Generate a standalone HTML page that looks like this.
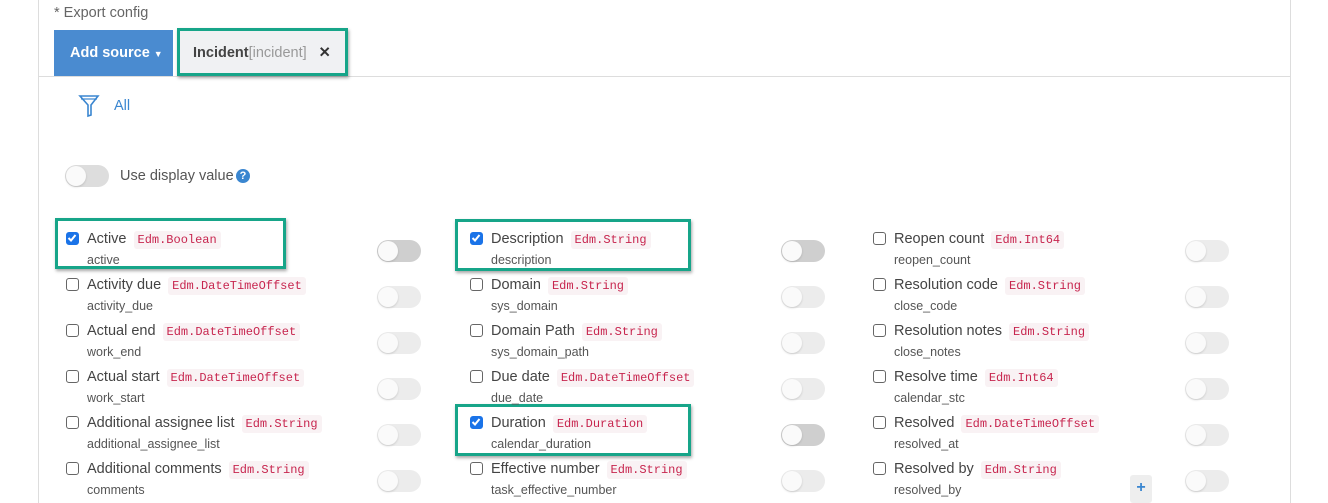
<!DOCTYPE html>
<html><head><meta charset="utf-8"><style>
*{box-sizing:border-box;margin:0;padding:0}
body{width:1328px;height:503px;background:#fff;font-family:"Liberation Sans",sans-serif;color:#444;position:relative;overflow:hidden}
.a{position:absolute}
.lbl{font-size:14.5px;color:#444;white-space:nowrap}
.sub{font-size:12.5px;color:#555;white-space:nowrap}
code{font-family:"Liberation Mono",monospace;font-size:12px;color:#c7254e;background:#f9f2f4;padding:2px 4px;border-radius:3px;margin-left:7px}
.cb{width:13px;height:13px;border:1.5px solid #666;border-radius:3px;background:#fff}
.cb.on{background:#1a73e8;border-color:#1a73e8}
.tg{width:44px;height:22px;border-radius:11px;background:#ececec}
.tg::after{content:"";position:absolute;left:1px;top:1px;width:20px;height:20px;border-radius:50%;background:#fafafa;box-shadow:0 1px 2px rgba(0,0,0,.15)}
.tg.on{background:#cfcfcf}
.gb{border:3px solid #17a589;box-shadow:1px 2px 3px rgba(0,0,0,.35)}
</style></head><body>
<div class="a" style="left:38px;top:0;width:1px;height:503px;background:#ddd"></div>
<div class="a" style="left:1290px;top:0;width:1px;height:503px;background:#ddd"></div>
<div class="a" style="left:38px;top:76px;width:1252px;height:1px;background:#ddd"></div>
<div class="a" style="left:54px;top:5px;font-size:14.5px;color:#666">* Export config</div>
<div class="a" style="left:54px;top:30px;width:119px;height:46px;background:#4a8bd0;color:#fff;font-weight:bold;font-size:14.5px;line-height:46px;padding-left:16px">Add source <span style="font-size:9px">▼</span></div>
<div class="a gb" style="left:177px;top:28px;width:171px;height:48px;background:#f0f1f3;font-size:14.5px;line-height:44px;padding-left:13px"><b style="color:#444">Incident</b><span style="color:#999">[incident]</span><span style="margin-left:12px;font-weight:bold;color:#333">✕</span></div>
<svg class="a" style="left:78px;top:94px" width="22" height="24" viewBox="0 0 22 24"><path d="M2 2H20L13 11V21L10 22V11Z" fill="none" stroke="#3a86d0" stroke-width="1.6"/><path d="M3 5H19" stroke="#3a86d0" stroke-width="1.2"/></svg>
<div class="a" style="left:114px;top:98px;font-size:14.5px;color:#3a86d0">All</div>
<div class="a tg on" style="left:65px;top:165px;background:#ddd"></div>
<div class="a" style="left:120px;top:168px;font-size:14.5px;color:#555">Use display value</div>
<div class="a" style="left:236px;top:169px;width:14px;height:14px;border-radius:50%;background:#3a86d0;color:#fff;font-size:11px;font-weight:bold;text-align:center;line-height:14px">?</div>
<div class="a gb" style="left:55px;top:218px;width:231px;height:51px"></div>
<div class="a gb" style="left:455px;top:219px;width:236px;height:52px"></div>
<div class="a gb" style="left:455px;top:404px;width:236px;height:52px"></div>
<div id="rows"></div>
<div class="a" style="left:1130px;top:475px;width:22px;height:28px;background:#eee;border-radius:3px;color:#3a86d0;font-weight:bold;text-align:center;line-height:26px">+</div>
<script>
var cols=[[66,377,[["Active","Edm.Boolean","active",1],["Activity due","Edm.DateTimeOffset","activity_due"],["Actual end","Edm.DateTimeOffset","work_end"],["Actual start","Edm.DateTimeOffset","work_start"],["Additional assignee list","Edm.String","additional_assignee_list"],["Additional comments","Edm.String","comments"]]],
[470,781,[["Description","Edm.String","description",1],["Domain","Edm.String","sys_domain"],["Domain Path","Edm.String","sys_domain_path"],["Due date","Edm.DateTimeOffset","due_date"],["Duration","Edm.Duration","calendar_duration",1],["Effective number","Edm.String","task_effective_number"]]],
[873,1185,[["Reopen count","Edm.Int64","reopen_count"],["Resolution code","Edm.String","close_code"],["Resolution notes","Edm.String","close_notes"],["Resolve time","Edm.Int64","calendar_stc"],["Resolved","Edm.DateTimeOffset","resolved_at"],["Resolved by","Edm.String","resolved_by"]]]];
var h="";
cols.forEach(function(c){c[2].forEach(function(r,i){var y=230+i*46;
h+='<div class="a cb'+(r[3]?' on':'')+'" style="left:'+c[0]+'px;top:'+(y+2)+'px">'+(r[3]?'<svg width="10" height="10" style="position:absolute;left:0;top:0"><path d="M1.5 5L4 7.5L8.5 2" stroke="#fff" stroke-width="2" fill="none"/></svg>':'')+'</div>';
h+='<div class="a lbl" style="left:'+(c[0]+21)+'px;top:'+(y+1)+'px">'+r[0]+'<code>'+r[1]+'</code></div>';
h+='<div class="a sub" style="left:'+(c[0]+21)+'px;top:'+(y+23)+'px">'+r[2]+'</div>';
h+='<div class="a tg'+(r[3]?' on':'')+'" style="left:'+c[1]+'px;top:'+(y+10)+'px"></div>';});});
document.getElementById("rows").innerHTML=h;
</script>
</body></html>
